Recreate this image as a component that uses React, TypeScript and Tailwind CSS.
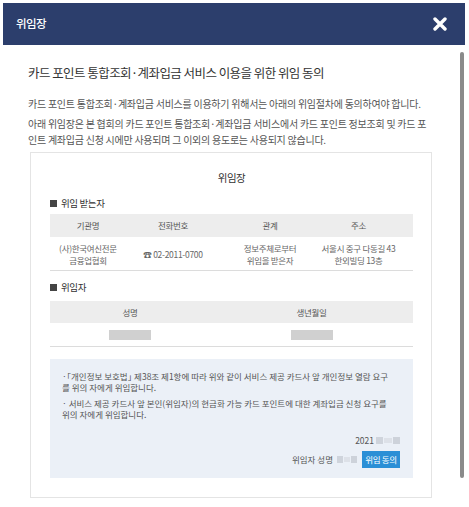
import React from 'react';

const recipients = [
  { org: ['(사)한국여신전문', '금융업협회'], tel: '02-2011-0700', rel: ['정보주체로부터', '위임을 받은자'], addr: ['서울시 중구 다동길 43', '한외빌딩 13층'] },
];

function Blur({ w }: { w: number }) {
  // blurred personal data in the screenshot
  return (
    <span className="inline-flex items-center gap-[1px] align-middle" style={{ width: w }}>
      <span className="h-[7px] flex-1 bg-[#cfd4dc]" />
      <span className="h-[5px] flex-1 bg-[#dde1e8]" />
      <span className="h-[7px] flex-1 bg-[#cdd2da]" />
    </span>
  );
}

function SectionLabel({ children }: { children: React.ReactNode }) {
  return (
    <div className="flex items-center gap-[4px] h-[14px] text-[9.5px] tracking-[-0.04em] text-[#333]">
      <span className="inline-block w-[7px] h-[7px] bg-[#444]" />
      <span>{children}</span>
    </div>
  );
}

export default function App() {
  return (
    <div className="w-[469px] h-[507px] bg-white pt-[3px] pl-[3px] font-['Noto_Sans_CJK_KR',sans-serif]">
      <div className="w-[462px] h-[501px] flex flex-col bg-white">
        <header className="h-[42px] shrink-0 bg-[#2c3e6c] flex items-center justify-between pl-[13px] pr-[18px]">
          <h1 className="text-[11.5px] font-medium tracking-[-0.05em] text-white">위임장</h1>
          <svg width="14" height="14" viewBox="0 0 14 14" aria-label="닫기">
            <path d="M2 2 L12 12 M12 2 L2 12" stroke="#fff" strokeWidth="3.4" strokeLinecap="round" />
          </svg>
        </header>

        <div className="flex-1 flex min-h-0">
          <main className="flex-1 pl-[25px] pr-[28px] pt-[20px]">
            <h2 className="h-[16px] leading-[16px] text-[12.5px] tracking-[-0.55px] text-[#333]">
              카드 포인트 통합조회·계좌입금 서비스 이용을 위한 위임 동의
            </h2>
            <p className="mt-[15px] leading-[16px] text-[10px] tracking-[-0.25px] text-[#555]">
              카드 포인트 통합조회·계좌입금 서비스를 이용하기 위해서는 아래의 위임절차에 동의하여야 합니다.
            </p>
            <p className="mt-[4px] leading-[16px] text-[10px] tracking-[-0.25px] text-[#555]">
              아래 위임장은 본 협회의 카드 포인트 통합조회·계좌입금 서비스에서 카드 포인트 정보조회 및 카드 포인트 계좌입금 신청 시에만 사용되며 그 이외의 용도로는 사용되지 않습니다.
            </p>

            <section className="mt-[4px] ml-[2px] border border-[#e4e4e4] pl-[19px] pr-[18px] pt-[17px] pb-[19px]">
              <div className="h-[16px] leading-[16px] text-center text-[10.5px] tracking-[-0.05em] text-[#333]">위임장</div>

              <div className="mt-[10px]">
                <SectionLabel>위임 받는자</SectionLabel>
              </div>
              <div className="mt-[4px] text-[8.5px] tracking-[-0.3px] text-[#666]">
                <div className="grid grid-cols-[76px_94px_100px_1fr] h-[23px] items-center bg-[#ededed] text-center text-[#555]">
                  <span>기관명</span>
                  <span>전화번호</span>
                  <span>관계</span>
                  <span className="pr-[16px]">주소</span>
                </div>
                {recipients.map((r) => (
                  <div key={r.tel} className="grid grid-cols-[76px_94px_100px_1fr] h-[34px] items-center border-b border-[#dcdcdc] text-center leading-[12px]">
                    <span>{r.org[0]}<br />{r.org[1]}</span>
                    <span>☎ {r.tel}</span>
                    <span>{r.rel[0]}<br />{r.rel[1]}</span>
                    <span className="pr-[16px]">{r.addr[0]}<br />{r.addr[1]}</span>
                  </div>
                ))}
              </div>

              <div className="mt-[9px]">
                <SectionLabel>위임자</SectionLabel>
              </div>
              <div className="mt-[7px] text-[8.5px] tracking-[-0.3px] text-[#555]">
                <div className="grid grid-cols-[160px_1fr] h-[22px] items-center bg-[#ededed] text-center">
                  <span>성명</span>
                  <span>생년월일</span>
                </div>
                <div className="grid grid-cols-[160px_1fr] h-[24px] items-center border-b border-[#dcdcdc] justify-items-center">
                  <span className="w-[42px] h-[10px] bg-[#d0d0d0]" />
                  <span className="w-[42px] h-[10px] bg-[#d0d0d0]" />
                </div>
              </div>

              <div className="mt-[12px] h-[119px] bg-[#ebf0f7] pl-[12px] pr-[13px] pt-[12px] text-[8.5px] tracking-[0px] text-[#555]">
                <p className="leading-[11px]">
                  ·「개인정보 보호법<span className="tracking-[-4px]">」</span> 제38조 제1항에 따라 위와 같이 서비스 제공 카드사 앞 개인정보 열람 요구
                  <br />
                  를 위의 자에게 위임합니다.
                </p>
                <p className="mt-[5px] leading-[11px]">
                  · 서비스 제공 카드사 앞 본인(위임자)의 현금화 가능 카드 포인트에 대한 계좌입금 신청 요구를
                  <br />
                  위의 자에게 위임합니다.
                </p>
                <div className="mt-[14px] flex justify-end items-center gap-[2px] h-[12px]">
                  <span>2021</span>
                  <Blur w={24} />
                </div>
                <div className="mt-[5px] flex justify-end items-center gap-[4px]">
                  <span>위임자 성명</span>
                  <Blur w={20} />
                  <button type="button" className="ml-[1px] h-[17px] w-[38px] bg-[#2b8fd6] text-white text-[8.5px] tracking-[-0.3px]">
                    위임 동의
                  </button>
                </div>
              </div>
            </section>
          </main>
          <div className="w-[4px] mt-[7px] h-[426px] mr-[1px] rounded-full bg-[#8a8a8a]" />
        </div>
      </div>
    </div>
  );
}
